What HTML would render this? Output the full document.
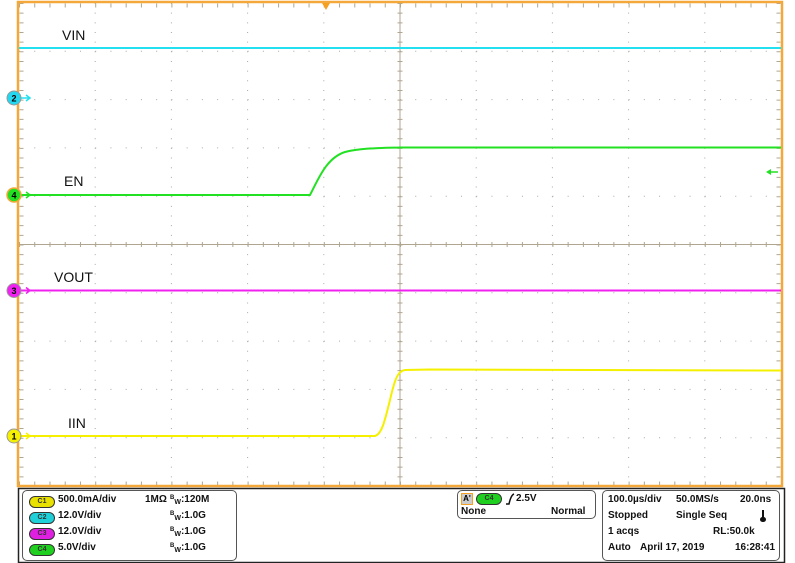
<!DOCTYPE html>
<html><head><meta charset="utf-8"><style>
html,body{margin:0;padding:0;background:#fff;width:795px;height:563px;overflow:hidden;font-family:"Liberation Sans",Arial,sans-serif}
.lbl{position:absolute;font-size:14px;color:#111}
.bx{position:absolute;border:1.3px solid #555;border-radius:5px;background:#fff}
.t{position:absolute;font-size:10px;font-weight:bold;color:#111;white-space:nowrap}
.pill{position:absolute;width:24px;height:10px;border-radius:6px;border:1px solid #333;font-size:7px;font-weight:bold;text-align:center;line-height:10px;color:#333}
.b{font-size:6px;position:relative;top:-3px}
.w{font-size:7px;position:relative;top:2px}
</style></head><body>
<svg width="795" height="563" style="position:absolute;left:0;top:0">
<g stroke="#a8a8a8" stroke-width="1">
<g stroke-dasharray="1 8.66">
<line x1="95.2" y1="3" x2="95.2" y2="486"/><line x1="171.4" y1="3" x2="171.4" y2="486"/><line x1="247.6" y1="3" x2="247.6" y2="486"/><line x1="323.8" y1="3" x2="323.8" y2="486"/>
<line x1="476.2" y1="3" x2="476.2" y2="486"/><line x1="552.4" y1="3" x2="552.4" y2="486"/><line x1="628.6" y1="3" x2="628.6" y2="486"/><line x1="704.8" y1="3" x2="704.8" y2="486"/>
</g>
<g stroke-dasharray="1 14.24">
<line x1="19" y1="51.3" x2="781" y2="51.3"/><line x1="19" y1="99.6" x2="781" y2="99.6"/><line x1="19" y1="147.9" x2="781" y2="147.9"/><line x1="19" y1="196.2" x2="781" y2="196.2"/>
<line x1="19" y1="292.8" x2="781" y2="292.8"/><line x1="19" y1="341.1" x2="781" y2="341.1"/><line x1="19" y1="389.4" x2="781" y2="389.4"/><line x1="19" y1="437.7" x2="781" y2="437.7"/>
</g>
</g>
<g stroke="#b0a690">
<line x1="400" y1="3" x2="400" y2="486" stroke-width="1"/>
<line x1="19" y1="244.5" x2="781" y2="244.5" stroke-width="1"/>
<line x1="400" y1="3" x2="400" y2="486" stroke-width="5" stroke-dasharray="1 8.66"/>
<line x1="19" y1="244.5" x2="781" y2="244.5" stroke-width="5" stroke-dasharray="1 14.24"/>
<line x1="21.5" y1="3" x2="21.5" y2="486" stroke-width="4" stroke-dasharray="1 8.66"/>
<line x1="778.5" y1="3" x2="778.5" y2="486" stroke-width="4" stroke-dasharray="1 8.66"/>
<line x1="19" y1="5.5" x2="781" y2="5.5" stroke-width="4" stroke-dasharray="1 14.24"/>
<line x1="19" y1="483.5" x2="781" y2="483.5" stroke-width="4" stroke-dasharray="1 14.24"/>
</g>
<rect x="18" y="2" width="764" height="484" fill="none" stroke="#f5a83a" stroke-width="2.5"/>
<line x1="19" y1="48" x2="781" y2="48" stroke="#22e0f0" stroke-width="2"/>
<path d="M19 195 L310 195 C318 180 326 158 345 152 C360 148 380 148 400 147.5 L781 147.5" fill="none" stroke="#22e022" stroke-width="2"/>
<line x1="19" y1="290.5" x2="781" y2="290.5" stroke="#f020f0" stroke-width="2"/>
<path d="M19 436 L375 436 C382 434 385 420 390 400 C395 378 398 371 405 370 L430 369.5 L781 370.5" fill="none" stroke="#f5f000" stroke-width="2"/>
<path d="M322 3 L330 3 L326 10 Z" fill="#f5a020"/>
<path d="M766 172 L771 169 L771 175 Z" fill="#22e022"/><line x1="770" y1="172" x2="778" y2="172" stroke="#22e022" stroke-width="1.5"/>
<g font-family="Liberation Sans,Arial" font-size="9" font-weight="bold" text-anchor="middle">
<path d="M20 98 L30 98 M26 95 L30 98 L26 101" stroke="#22e0f0" stroke-width="1.5" fill="none"/>
<circle cx="14" cy="98" r="7" fill="#22d8f0" stroke="#999"/><text x="14" y="101.5">2</text>
<path d="M20 195 L30 195 M26 192 L30 195 L26 198" stroke="#22e022" stroke-width="1.5" fill="none"/>
<circle cx="14" cy="195" r="7" fill="#22e022" stroke="#f5a83a" stroke-width="1.5"/><text x="14" y="198.5">4</text>
<path d="M20 290.5 L30 290.5 M26 287.5 L30 290.5 L26 293.5" stroke="#f020f0" stroke-width="1.5" fill="none"/>
<circle cx="14" cy="290.5" r="7" fill="#f020f0" stroke="#999"/><text x="14" y="294">3</text>
<path d="M20 436 L30 436 M26 433 L30 436 L26 439" stroke="#f5f000" stroke-width="1.5" fill="none"/>
<circle cx="14" cy="436" r="7" fill="#f5f000" stroke="#999"/><text x="14" y="439.5">1</text>
</g>
<rect x="18.5" y="488.5" width="766" height="74" fill="none" stroke="#222" stroke-width="1.5"/>
</svg>
<div class="lbl" style="left:62px;top:27px">VIN</div>
<div class="lbl" style="left:64px;top:173px">EN</div>
<div class="lbl" style="left:54px;top:269px">VOUT</div>
<div class="lbl" style="left:68px;top:415px">IIN</div>

<div class="bx" style="left:22px;top:490px;width:213px;height:69px"></div>
<div class="pill" style="left:29px;top:496px;background:#e8e000">C1</div>
<div class="pill" style="left:29px;top:512px;background:#20d0d8">C2</div>
<div class="pill" style="left:29px;top:528px;background:#e020e0">C3</div>
<div class="pill" style="left:29px;top:544px;background:#20d020">C4</div>
<div class="t" style="left:58px;top:494px">500.0mA/div</div>
<div class="t" style="left:58px;top:510px">12.0V/div</div>
<div class="t" style="left:58px;top:526px">12.0V/div</div>
<div class="t" style="left:58px;top:542px">5.0V/div</div>
<div class="t" style="left:145px;top:494px">1MΩ</div>
<div class="t" style="left:170px;top:494px"><span class="b">B</span><span class="w">W</span>:120M</div>
<div class="t" style="left:170px;top:510px"><span class="b">B</span><span class="w">W</span>:1.0G</div>
<div class="t" style="left:170px;top:526px"><span class="b">B</span><span class="w">W</span>:1.0G</div>
<div class="t" style="left:170px;top:542px"><span class="b">B</span><span class="w">W</span>:1.0G</div>

<div class="bx" style="left:457px;top:490px;width:137px;height:27px"></div>
<div style="position:absolute;left:461px;top:493px;width:10px;height:10px;background:#ccc;border:1px solid #f5a020;font-size:8px;font-weight:bold;line-height:10px;text-align:center">A'</div>
<div class="pill" style="left:476px;top:493px;background:#20d020">C4</div>
<svg style="position:absolute;left:505px;top:493px" width="10" height="12"><path d="M1 11 L4 11 Q6 2 9 1" stroke="#111" stroke-width="1.5" fill="none"/></svg>
<div class="t" style="left:516px;top:493px">2.5V</div>
<div class="t" style="left:461px;top:506px">None</div>
<div class="t" style="left:551px;top:506px">Normal</div>

<div class="bx" style="left:602px;top:490px;width:176px;height:69px"></div>
<div class="t" style="left:608px;top:494px">100.0µs/div</div>
<div class="t" style="left:676px;top:494px">50.0MS/s</div>
<div class="t" style="left:740px;top:494px">20.0ns</div>
<div class="t" style="left:608px;top:510px">Stopped</div>
<div class="t" style="left:676px;top:510px">Single Seq</div>
<div style="position:absolute;left:762px;top:510px;width:2px;height:9px;background:#111"></div>
<div style="position:absolute;left:760px;top:517px;width:6px;height:5px;border-radius:3px;background:#111"></div>
<div class="t" style="left:608px;top:526px">1 acqs</div>
<div class="t" style="left:713px;top:526px">RL:50.0k</div>
<div class="t" style="left:608px;top:542px">Auto</div>
<div class="t" style="left:640px;top:542px">April 17, 2019</div>
<div class="t" style="left:735px;top:542px">16:28:41</div>
</body></html>
